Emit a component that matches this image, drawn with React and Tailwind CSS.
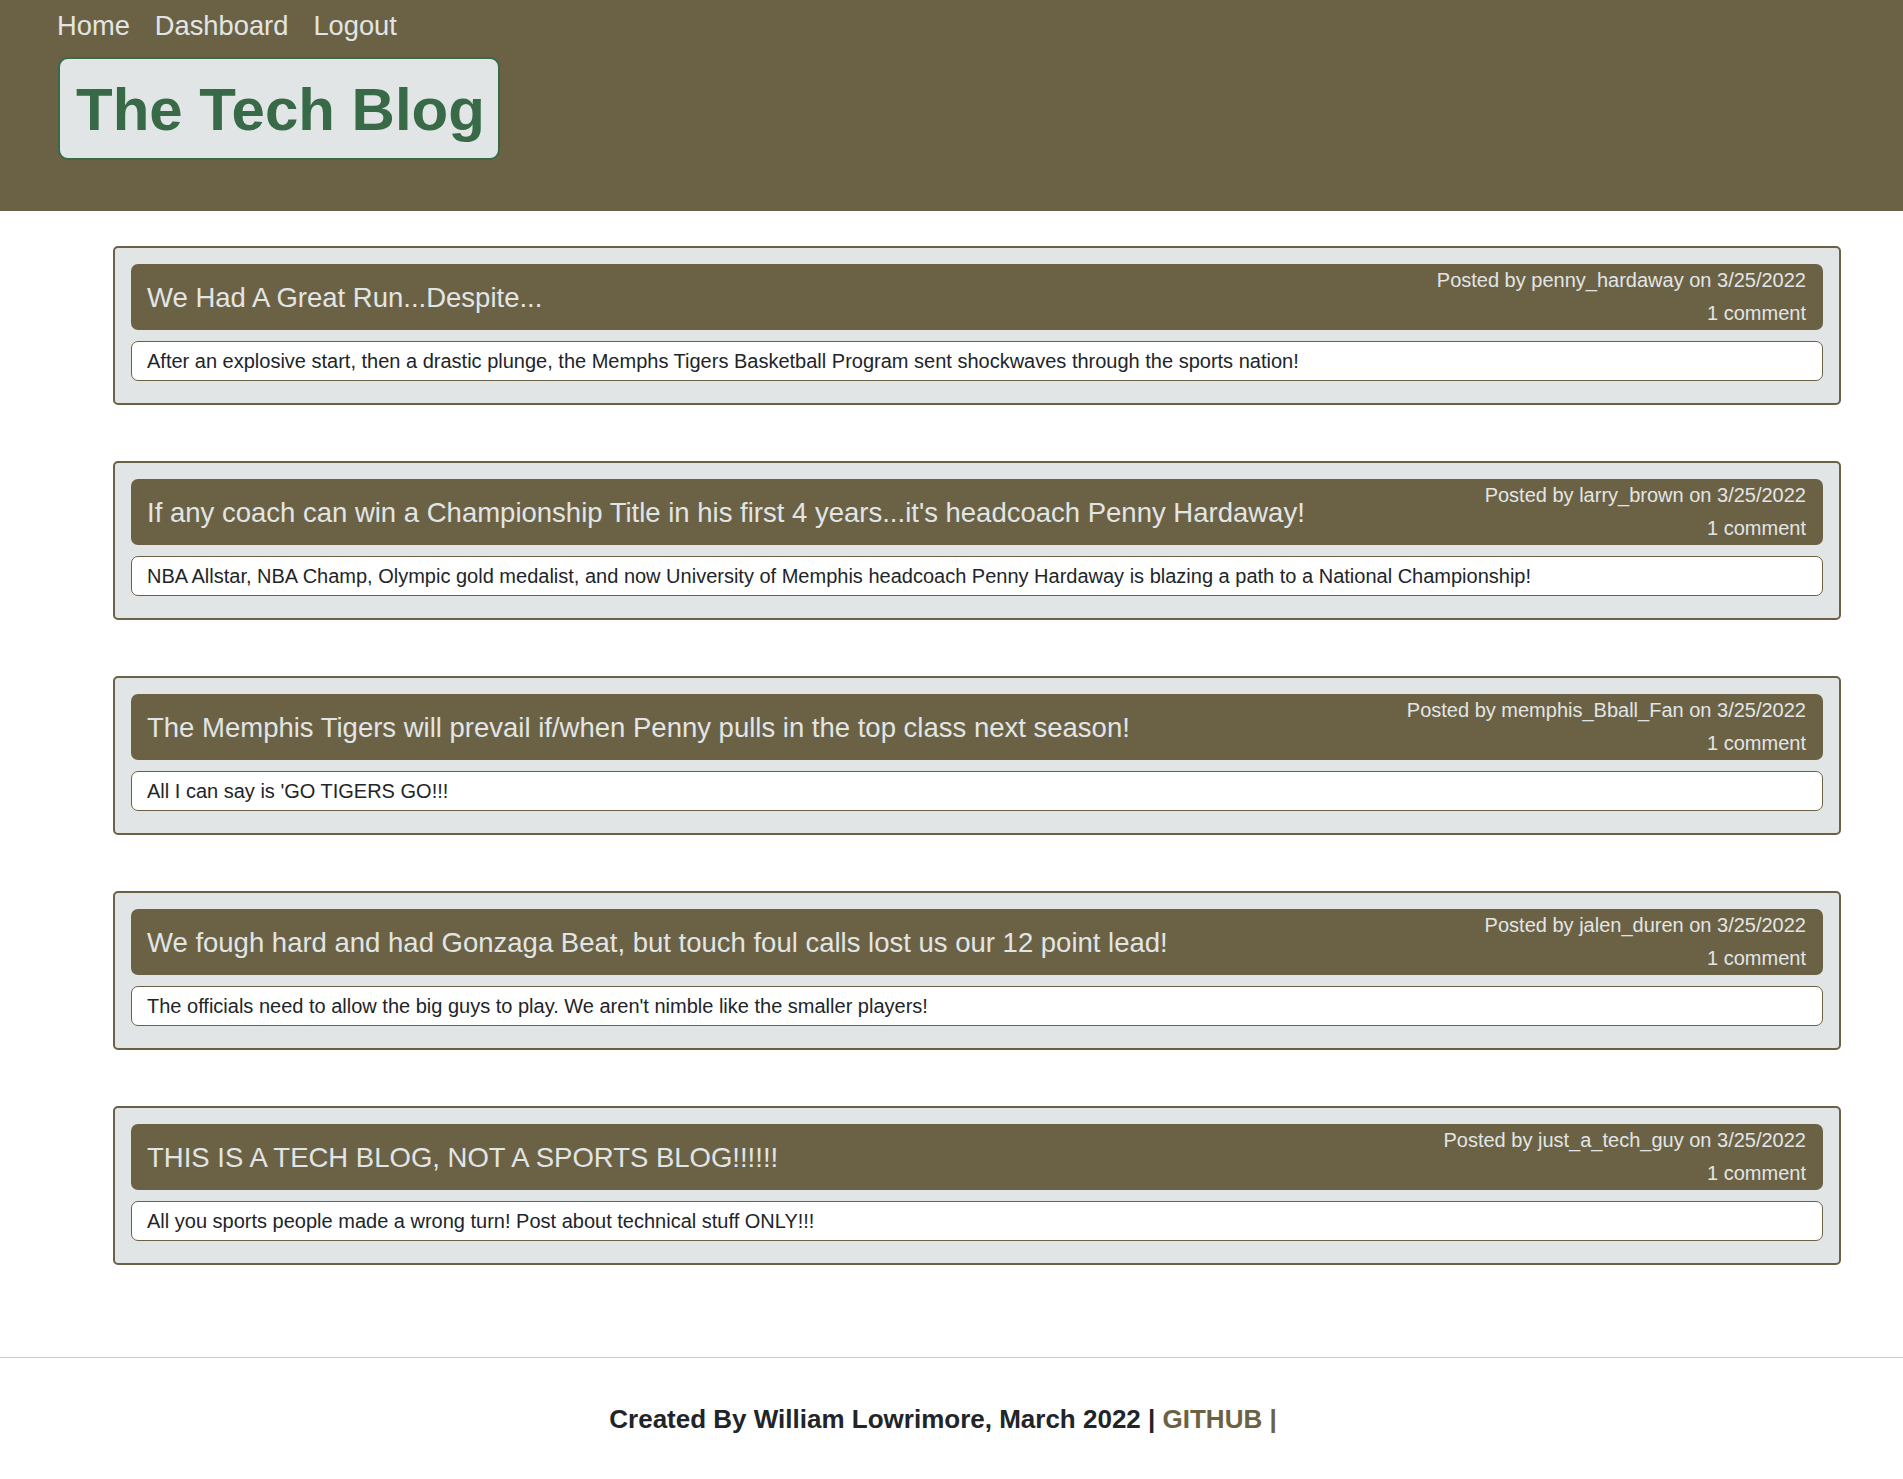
const posts = [
  {
    id: 1,
    title: 'We Had A Great Run...Despite...',
    author: 'penny_hardaway',
    body: 'After an explosive start, then a drastic plunge, the Memphs Tigers Basketball Program sent shockwaves through the sports nation!',
  },
  {
    id: 2,
    title: "If any coach can win a Championship Title in his first 4 years...it's headcoach Penny Hardaway!",
    author: 'larry_brown',
    body: 'NBA Allstar, NBA Champ, Olympic gold medalist, and now University of Memphis headcoach Penny Hardaway is blazing a path to a National Championship!',
  },
  {
    id: 3,
    title: 'The Memphis Tigers will prevail if/when Penny pulls in the top class next season!',
    author: 'memphis_Bball_Fan',
    body: "All I can say is 'GO TIGERS GO!!!",
  },
  {
    id: 4,
    title: 'We fough hard and had Gonzaga Beat, but touch foul calls lost us our 12 point lead!',
    author: 'jalen_duren',
    body: "The officials need to allow the big guys to play. We aren't nimble like the smaller players!",
  },
  {
    id: 5,
    title: 'THIS IS A TECH BLOG, NOT A SPORTS BLOG!!!!!!',
    author: 'just_a_tech_guy',
    body: 'All you sports people made a wrong turn! Post about technical stuff ONLY!!!',
  },
];

const PostCard = ({ post }) => (
  <article className="bg-[#e2e5e5] border-2 border-[#6b6246] rounded-[5px] pt-4 pb-[22px] px-4">
    <div className="flex items-center justify-between bg-[#6b6246] rounded-[7px] pl-4 pr-[17px] text-[#e2e5e5]">
      <h3 className="text-[27.5px] leading-[33px]">{post.title}</h3>
      <div className="text-right text-[20px] leading-[33px] shrink-0 ml-4">
        <p>Posted by {post.author} on 3/25/2022</p>
        <p>1 comment</p>
      </div>
    </div>
    <div className="mt-[11px] bg-white border border-[#6b6246] rounded-[7px] pl-[15px] pr-4 pt-2 pb-[7px] text-[20px] leading-[23px] text-[#212529]">
      {post.body}
    </div>
  </article>
);

const App = () => {
  return (
    <div className="min-h-screen bg-white font-['Liberation_Sans',Arial,sans-serif]">
      <header className="bg-[#6b6246] h-[211px]">
        <nav className="flex gap-[25px] pl-[57px] pt-[10px] text-[27.3px] leading-[32px] text-[#e2e5e5]">
          <a href="#">Home</a>
          <a href="#">Dashboard</a>
          <a href="#">Logout</a>
        </nav>
        <div className="mt-[15px] ml-[58px] inline-block bg-[#e2e5e5] border-2 border-[#386a48] rounded-[10px] pl-[16px] pr-[13px] pt-[16px] pb-[14px]">
          <h1 className="text-[60px] leading-[69px] font-bold text-[#386a48]">The Tech Blog</h1>
        </div>
      </header>

      <main className="pl-[113px] pr-[62px] pt-[35px] flex flex-col gap-[56px]">
        {posts.map((post) => (
          <PostCard key={post.id} post={post} />
        ))}
      </main>

      <footer className="mt-[92px] border-t border-[#cccccc] pt-[46px] pb-[46px] pr-[17px] text-center text-[26px] leading-[30px] font-bold text-[#212529]">
        Created By William Lowrimore, March 2022 | <a href="#" className="text-[#6b6246]">GITHUB |</a>
      </footer>
    </div>
  );
};

export default App;
